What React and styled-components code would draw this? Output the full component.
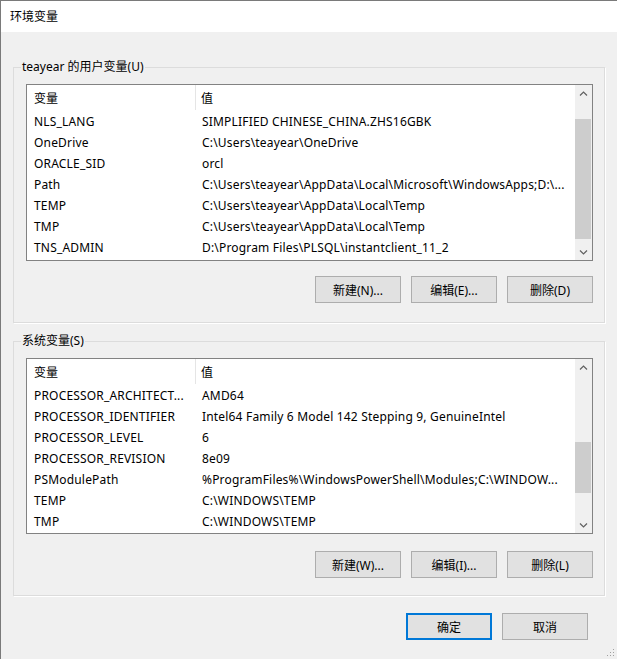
import React from 'react';
import styled, { createGlobalStyle } from 'styled-components';

const GlobalStyle = createGlobalStyle`
    html, body {
        margin: 0;
        padding: 0;
        background: #f0f0f0;
    }
    body {
        font-family: "Noto Sans", "Noto Sans CJK SC", sans-serif;
        font-size: 12px;
        color: #000;
    }
`;

const Window = styled.div`
    position: relative;
    width: 617px;
    height: 659px;
    box-sizing: border-box;
    border-top: 1px solid #7a7a7a;
    border-left: 1px solid #7a7a7a;
    background: #f0f0f0;
    overflow: hidden;
    display: flex;
    flex-direction: column;
`;

const TitleBar = styled.div`
    height: 31px;
    background: #fff;
    display: flex;
    align-items: center;
    justify-content: space-between;
    padding-left: 9px;
`;

const Title = styled.span`
    font-size: 12px;
    line-height: 16px;
`;

const CloseButton = styled.div`
    width: 46px;
    height: 31px;
    display: flex;
    align-items: center;
    justify-content: center;
    margin-right: -31px;
`;

const Content = styled.div`
    padding: 27px 0 0 12px;
    display: flex;
    flex-direction: column;
    gap: 10px;
`;

const Group = styled.fieldset`
    width: 592px;
    box-sizing: border-box;
    margin: 0;
    padding: 0;
    border: 1px solid #dcdcdc;
    box-shadow: 1px 1px 0 #fff;
    min-width: 0;
`;

const Legend = styled.legend`
    margin-left: 7px;
    padding: 0 1px;
    line-height: 16px;
    font-size: 12px;
`;

const GroupBody = styled.div`
    padding: 9px 11px ${p => p.$bottom}px 12px;
    display: flex;
    flex-direction: column;
    gap: ${p => p.$gap}px;
`;

const List = styled.div`
    height: ${p => p.$height}px;
    box-sizing: border-box;
    border: 1px solid #828282;
    background: #fff;
    display: flex;
`;

const Table = styled.div`
    flex: 1;
    min-width: 0;
    display: flex;
    flex-direction: column;
`;

const HeaderRow = styled.div`
    height: 25px;
    box-sizing: border-box;
    display: grid;
    grid-template-columns: 169px 1fr;
    align-items: stretch;
`;

const HeaderCell = styled.div`
    display: flex;
    align-items: center;
    padding: 1px 0 0 ${p => (p.$first ? '7px' : '5px')};
    border-right: ${p => (p.$first ? '1px solid #e5e5e5' : 'none')};
`;

const Row = styled.div`
    height: 21px;
    box-sizing: border-box;
    display: grid;
    grid-template-columns: 170px 1fr;
    align-items: center;
    padding-top: 2px;
`;

const Cell = styled.div`
    white-space: nowrap;
    overflow: hidden;
    padding-left: ${p => (p.$first ? '7px' : '5px')};
    line-height: 16px;
    letter-spacing: 0.18px;
`;

const ScrollBar = styled.div`
    width: 17px;
    background: #f0f0f0;
    display: flex;
    flex-direction: column;
`;

const ArrowBox = styled.div`
    height: 17px;
    display: flex;
    align-items: center;
    justify-content: center;
`;

const Track = styled.div`
    flex: 1;
    display: flex;
    flex-direction: column;
`;

const Thumb = styled.div`
    margin: 0 1px 0 0;
    background: #cdcdcd;
`;

const ButtonRow = styled.div`
    display: flex;
    justify-content: flex-end;
    gap: 10px;
`;

const Button = styled.button`
    width: 86px;
    height: 27px;
    box-sizing: border-box;
    margin: 0;
    padding: 0;
    font-family: inherit;
    font-size: 12px;
    color: #000;
    background: #e1e1e1;
    border: ${p => (p.$default ? '2px solid #0078d7' : '1px solid #adadad')};
    border-radius: 0;
`;

const Footer = styled.div`
    display: flex;
    justify-content: flex-end;
    gap: 10px;
    padding: 17px 29px 0 0;
`;

const Grip = styled.svg`
    position: absolute;
    right: 2px;
    bottom: 2px;
`;

const userVars = [
    ['NLS_LANG', 'SIMPLIFIED CHINESE_CHINA.ZHS16GBK'],
    ['OneDrive', 'C:\\Users\\teayear\\OneDrive'],
    ['ORACLE_SID', 'orcl'],
    ['Path', 'C:\\Users\\teayear\\AppData\\Local\\Microsoft\\WindowsApps;D:\\...'],
    ['TEMP', 'C:\\Users\\teayear\\AppData\\Local\\Temp'],
    ['TMP', 'C:\\Users\\teayear\\AppData\\Local\\Temp'],
    ['TNS_ADMIN', 'D:\\Program Files\\PLSQL\\instantclient_11_2'],
];

const systemVars = [
    ['PROCESSOR_ARCHITECT...', 'AMD64'],
    ['PROCESSOR_IDENTIFIER', 'Intel64 Family 6 Model 142 Stepping 9, GenuineIntel'],
    ['PROCESSOR_LEVEL', '6'],
    ['PROCESSOR_REVISION', '8e09'],
    ['PSModulePath', '%ProgramFiles%\\WindowsPowerShell\\Modules;C:\\WINDOW...'],
    ['TEMP', 'C:\\WINDOWS\\TEMP'],
    ['TMP', 'C:\\WINDOWS\\TEMP'],
];

const Chevron = ({ down }) => (
    <svg width="9" height="6" viewBox="0 0 9 6">
        <polyline
            points={down ? '1,1.5 4.5,5 8,1.5' : '1,4.5 4.5,1 8,4.5'}
            fill="none"
            stroke="#606060"
            strokeWidth="1.2"
        />
    </svg>
);

function VarList({ rows, height, thumbTop, thumbHeight }) {
    return (
        <List $height={height}>
            <Table>
                <HeaderRow>
                    <HeaderCell $first>变量</HeaderCell>
                    <HeaderCell>值</HeaderCell>
                </HeaderRow>
                {rows.map(([name, value]) => (
                    <Row key={name}>
                        <Cell $first>{name}</Cell>
                        <Cell>{value}</Cell>
                    </Row>
                ))}
            </Table>
            <ScrollBar>
                <ArrowBox><Chevron /></ArrowBox>
                <Track>
                    <div style={{ height: thumbTop }} />
                    <Thumb style={{ height: thumbHeight }} />
                </Track>
                <ArrowBox><Chevron down /></ArrowBox>
            </ScrollBar>
        </List>
    );
}

function VarGroup({ label, rows, keys, listHeight, gap, bottom, thumbTop, thumbHeight }) {
    return (
        <Group>
            <Legend>{label}</Legend>
            <GroupBody $gap={gap} $bottom={bottom}>
                <VarList rows={rows} height={listHeight} thumbTop={thumbTop} thumbHeight={thumbHeight} />
                <ButtonRow>
                    <Button>新建({keys[0]})...</Button>
                    <Button>编辑({keys[1]})...</Button>
                    <Button>删除({keys[2]})</Button>
                </ButtonRow>
            </GroupBody>
        </Group>
    );
}

export default function App() {
    return (
        <Window>
            <GlobalStyle />
            <TitleBar>
                <Title>环境变量</Title>
                <CloseButton>
                    <svg width="11" height="11" viewBox="0 0 11 11">
                        <path d="M0.5 0.5 L10.5 10.5 M10.5 0.5 L0.5 10.5" stroke="#111" strokeWidth="1" />
                    </svg>
                </CloseButton>
            </TitleBar>
            <Content>
                <VarGroup
                    label="teayear 的用户变量(U)"
                    rows={userVars}
                    keys={['N', 'E', 'D']}
                    listHeight={177}
                    gap={15}
                    bottom={19}
                    thumbTop={17}
                    thumbHeight={120}
                />
                <VarGroup
                    label="系统变量(S)"
                    rows={systemVars}
                    keys={['W', 'I', 'L']}
                    listHeight={176}
                    gap={17}
                    bottom={17}
                    thumbTop={66}
                    thumbHeight={51}
                />
            </Content>
            <Footer>
                <Button $default>确定</Button>
                <Button>取消</Button>
            </Footer>
            <Grip width="10" height="10" viewBox="0 0 10 10">
                {[[8, 2], [8, 5], [5, 5], [8, 8], [5, 8], [2, 8]].map(([x, y]) => (
                    <rect key={`${x}-${y}`} x={x} y={y} width="1" height="1" fill="#a0a0a0" />
                ))}
            </Grip>
        </Window>
    );
}
